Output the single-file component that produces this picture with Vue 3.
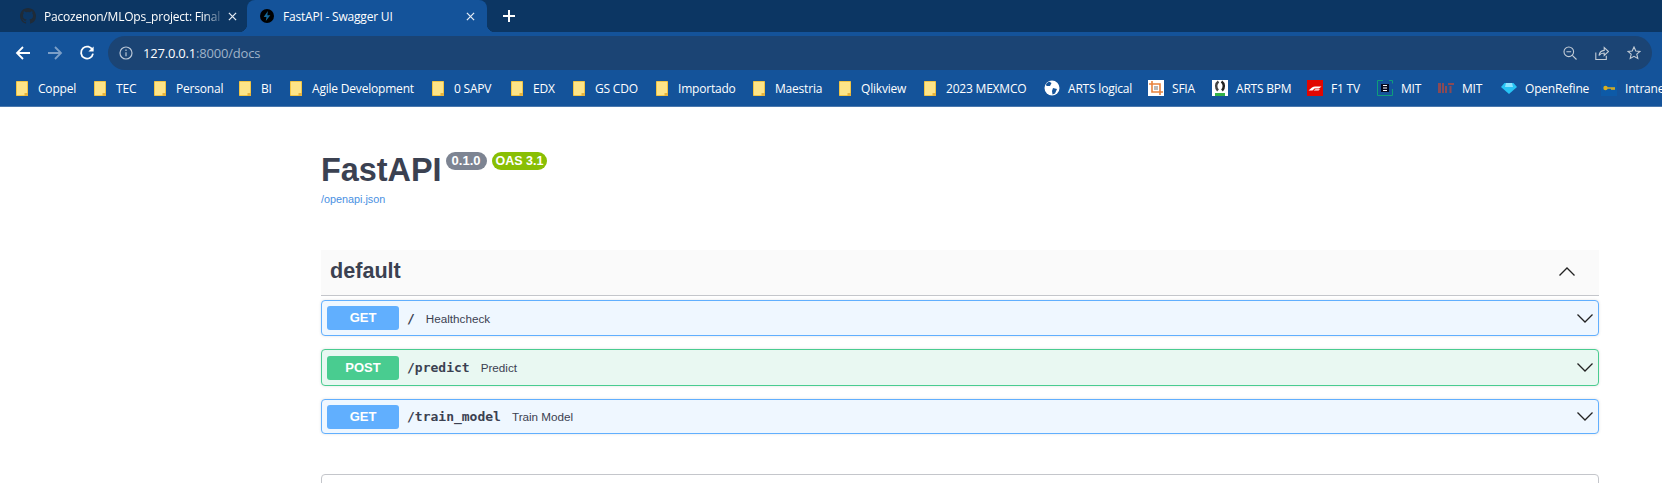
<template>
  <div class="browser">
    <div class="tabstrip">
      <div class="tab inactive">
        <svg class="favicon" viewBox="0 0 16 16"><path fill="#1f2b38" d="M8 0C3.58 0 0 3.58 0 8c0 3.54 2.29 6.53 5.47 7.59.4.07.55-.17.55-.38v-1.34c-2.23.48-2.69-1.07-2.69-1.07-.36-.92-.89-1.17-.89-1.17-.73-.5.05-.49.05-.49.8.06 1.23.82 1.23.82.71 1.23 1.87.87 2.33.66.07-.52.28-.87.5-1.07-1.78-.2-3.64-.89-3.64-3.95 0-.87.31-1.59.82-2.15-.08-.2-.36-1.02.08-2.12 0 0 .67-.21 2.2.82a7.6 7.6 0 0 1 4 0c1.53-1.03 2.2-.82 2.2-.82.44 1.1.16 1.92.08 2.12.51.56.82 1.27.82 2.15 0 3.07-1.87 3.75-3.65 3.95.29.25.54.73.54 1.48v2.2c0 .21.15.46.55.38A8 8 0 0 0 16 8c0-4.42-3.58-8-8-8z"/></svg>
        <span class="tab_title fade">Pacozenon/MLOps_project: Final</span>
        <svg class="close" viewBox="0 0 10 10"><path d="M1 1l8 8M9 1l-8 8"/></svg>
      </div>
      <div class="tab active">
        <svg class="favicon small" viewBox="0 0 16 16"><circle cx="8" cy="8" r="8" fill="#000"/><path fill="#14699a" d="M9 2.400 4.200 9h3.200l-.8 4.600L11.800 7H8.400z"/></svg>
        <span class="tab_title">FastAPI - Swagger UI</span>
        <svg class="close" viewBox="0 0 10 10"><path d="M1 1l8 8M9 1l-8 8"/></svg>
      </div>
      <svg class="newtab" viewBox="0 0 12 12"><path d="M6 0v12M0 6h12"/></svg>
    </div>

    <div class="toolbar">
      <svg class="nav" viewBox="0 0 16 16"><path d="M15 8H2M8 2 2 8l6 6"/></svg>
      <svg class="nav dim" viewBox="0 0 16 16"><path d="M1 8h13M8 2l6 6-6 6"/></svg>
      <svg class="nav" viewBox="0 0 16 16"><path d="M13.600 5.200A6 6 0 1 0 14 8.600"/><path class="solid" d="M14.600 1.400v5.200H9.400z"/></svg>
      <div class="omnibox">
        <svg class="info" viewBox="0 0 14 14"><circle cx="7" cy="7" r="6"/><path d="M7 6.200v4M7 3.600v1.400"/></svg>
        <span class="url"><b>127.0.0.1</b>:8000/docs</span>
        <div class="omni_icons">
          <svg viewBox="0 0 14 14"><circle cx="5.800" cy="5.800" r="4.800"/><path d="M9.300 9.300 13.500 13.500M3.400 5.800h4.800"/></svg>
          <svg viewBox="0 0 14 14"><path d="M.8 6.500v7h10.500V9.800M4 9.500C4.500 6.500 6.500 4.600 9.200 4.400V1.500l4.300 4-4.300 4V7C7 7 5.200 7.800 4 9.500z"/></svg>
          <svg viewBox="0 0 14 14"><path d="M7 1l1.800 4 4.200.4-3.200 2.800 1 4.300L7 10.300l-3.800 2.200 1-4.300L1 5.400 5.200 5z"/></svg>
        </div>
      </div>
    </div>

    <div class="bookmarks">
      <div v-for="(b, i) in bookmarks" :key="i" class="bookmark" :class="{ is_folder: b.icon === 'folder' }" :style="{ width: b.w + 'px' }">
        <span class="bm_icon">
          <svg v-if="b.icon === 'folder'" viewBox="0 0 12 15" class="folder">
            <path fill="#fde488" stroke="#f2c544" d="M.5.500h11v14H.5z"/><path fill="#e8b33c" d="M8.500 15v-3H12v3z"/>
          </svg>
          <svg v-else-if="b.icon === 'globe'" viewBox="0 0 16 16"><circle cx="8" cy="8" r="7.500" fill="#fff"/><path fill="#14539a" d="M5 1.500 7.500 3 6 6 2.500 6 2 4zM9 8l4 1-2 4.500-2.500 1L8 11z"/></svg>
          <svg v-else-if="b.icon === 'sfia'" viewBox="0 0 16 16"><rect width="16" height="16" fill="#fff"/><path fill="none" stroke="#e8823c" stroke-width="1.600" d="M1 4h11v11M4 1v11h11"/><rect x="6" y="6" width="4" height="4" fill="#b9b9b9"/></svg>
          <svg v-else-if="b.icon === 'bpm'" viewBox="0 0 16 16"><rect width="16" height="16" fill="#fff"/><path fill="none" stroke="#444" stroke-width="2.500" d="M6.500 1.500C3.500 3.500 3.500 8 6 10.500"/><path fill="none" stroke="#222" stroke-width="2.500" d="M9.500 1.500c3 2 3 6.500.5 9"/><rect x="3" y="13" width="10" height="3" fill="#34b34a"/></svg>
          <svg v-else-if="b.icon === 'f1'" viewBox="0 0 16 16"><rect width="16" height="16" fill="#e10600"/><path fill="#fff" d="M1.500 10.500 5 7.500c1-.8 2-1 3-1h6.500L12 8.500H7.500l-2 2zM6.500 10.500l2-1.200h4.500l-1.500 1.200z"/></svg>
          <svg v-else-if="b.icon === 'mit_e'" viewBox="0 0 16 16"><path fill="none" stroke="#0f9d7a" d="M15.500 3.500V.5H12M6 .5H.5v15h15V9"/><rect x="4" y="4" width="8" height="8" fill="#050a20"/><path stroke="#fff" d="M6 5.500h4M6 8h4M6 10.500h4"/></svg>
          <svg v-else-if="b.icon === 'mit_p'" viewBox="0 0 16 16"><path fill="#8a4a55" d="M0 3h3v10H0zM4 3h2v10H4zM7 6h2v7H7zM10 3h6v2h-6zM11.500 6h2v7h-2z"/></svg>
          <svg v-else-if="b.icon === 'gem'" viewBox="0 0 16 16"><path fill="#27c4f5" d="M3.500 3h9L16 7l-8 7-8-7z"/><path fill="#8be4ff" d="M5 3h6l1 4H4z"/></svg>
          <svg v-else viewBox="0 0 16 16"><rect width="16" height="16" fill="#0d5aa7"/><circle cx="4.500" cy="8" r="2.200" fill="#d8b020"/><path stroke="#d8b020" stroke-width="1.500" d="M6 8h8M11 8v2M13 8v2"/></svg>
        </span>
        <span class="bm_text">{{ b.label }}</span>
      </div>
    </div>

    <div class="swagger">
      <div class="info_block">
        <div class="title_row">
          <h2>FastAPI</h2>
          <span class="badge version">0.1.0</span>
          <span class="badge oas">OAS 3.1</span>
        </div>
        <a class="spec_link">/openapi.json</a>
      </div>

      <div class="tag_head">
        <span>default</span>
        <svg class="chevron" viewBox="0 0 16 9"><path d="M.5 8.500 8 1l7.500 7.500"/></svg>
      </div>

      <div class="op_list">
        <div v-for="op in operations" :key="op.path" class="op" :class="op.method.toLowerCase()">
          <span class="method">{{ op.method }}</span>
          <span class="path">{{ op.path }}</span>
          <span class="desc">{{ op.desc }}</span>
          <svg class="chevron" viewBox="0 0 16 9"><path d="M.5.5 8 8 15.500.5"/></svg>
        </div>
      </div>

      <div class="schemas"></div>
    </div>
  </div>
</template>

<script setup>
const bookmarks = [
  { label: 'Coppel', icon: 'folder', w: 78 },
  { label: 'TEC', icon: 'folder', w: 60 },
  { label: 'Personal', icon: 'folder', w: 85 },
  { label: 'BI', icon: 'folder', w: 51 },
  { label: 'Agile Development', icon: 'folder', w: 142 },
  { label: '0 SAPV', icon: 'folder', w: 79 },
  { label: 'EDX', icon: 'folder', w: 62 },
  { label: 'GS CDO', icon: 'folder', w: 83 },
  { label: 'Importado', icon: 'folder', w: 97 },
  { label: 'Maestria', icon: 'folder', w: 86 },
  { label: 'Qlikview', icon: 'folder', w: 85 },
  { label: '2023 MEXMCO', icon: 'folder', w: 120 },
  { label: 'ARTS logical', icon: 'globe', w: 104 },
  { label: 'SFIA', icon: 'sfia', w: 64 },
  { label: 'ARTS BPM', icon: 'bpm', w: 95 },
  { label: 'F1 TV', icon: 'f1', w: 70 },
  { label: 'MIT', icon: 'mit_e', w: 61 },
  { label: 'MIT', icon: 'mit_p', w: 63 },
  { label: 'OpenRefine', icon: 'gem', w: 100 },
  { label: 'Intranet', icon: 'key', w: 100 },
]

const operations = [
  { method: 'GET', path: '/', desc: 'Healthcheck' },
  { method: 'POST', path: '/predict', desc: 'Predict' },
  { method: 'GET', path: '/train_model', desc: 'Train Model' },
]
</script>

<style>
html,
body {
  margin: 0;
  background: #fff;
  overflow: hidden;
}
</style>

<style scoped>
.browser {
  width: 1662px;
  height: 483px;
  overflow: hidden;
  font-family: 'Open Sans', 'Liberation Sans', sans-serif;
}

/* chrome */
.tabstrip {
  height: 32px;
  background: #0c3663;
  display: flex;
  align-items: stretch;
}
.tab {
  position: relative;
  flex: none;
  display: flex;
  align-items: center;
  color: #fff;
  font-size: 12px;
  letter-spacing: -0.2px;
  box-sizing: border-box;
}
.tab.inactive {
  width: 247px;
  padding: 0 10px 0 20px;
}
.tab.active {
  width: 240px;
  background: #14539a;
  border-radius: 8px 8px 0 0;
  padding: 0 12px 0 13px;
}
.tab.active::before,
.tab.active::after {
  content: '';
  position: absolute;
  bottom: 0;
  width: 8px;
  height: 8px;
}
.tab.active::before {
  left: -8px;
  background: radial-gradient(circle at 0 0, transparent 8px, #14539a 8.5px);
}
.tab.active::after {
  right: -8px;
  background: radial-gradient(circle at 100% 0, transparent 8px, #14539a 8.5px);
}
.favicon {
  width: 16px;
  height: 16px;
  flex: none;
}
.favicon.small {
  width: 14px;
  height: 14px;
}
.tab_title {
  flex: 1;
  margin-left: 8px;
  white-space: nowrap;
  overflow: hidden;
}
.tab.active .tab_title {
  margin-left: 9px;
}
.tab_title.fade {
  -webkit-mask-image: linear-gradient(to right, #000 88%, transparent);
  mask-image: linear-gradient(to right, #000 88%, transparent);
}
.close {
  width: 9px;
  height: 9px;
  flex: none;
  margin-left: 3px;
  stroke: #e6edf5;
  stroke-width: 1.400;
  fill: none;
}
.newtab {
  width: 12px;
  height: 12px;
  margin: 10px 0 0 16px;
  stroke: #fff;
  stroke-width: 2;
  fill: none;
}
.toolbar {
  height: 38px;
  background: #14539a;
  display: flex;
  align-items: center;
  padding: 4px 10px 0 15px;
  box-sizing: border-box;
  gap: 16px;
}
.nav {
  width: 16px;
  height: 16px;
  flex: none;
  fill: none;
  stroke: #fff;
  stroke-width: 1.800;
}
.nav.dim {
  stroke: #7c9fc8;
}
.nav .solid {
  fill: #fff;
  stroke: none;
}
.omnibox {
  flex: 1;
  height: 34px;
  margin-left: -3px;
  background: #1b4474;
  border-radius: 17px;
  display: flex;
  align-items: center;
  padding: 0 11px;
}
.info {
  width: 14px;
  height: 14px;
  fill: none;
  stroke: #b9c6d6;
  stroke-width: 1.200;
}
.url {
  margin-left: 10px;
  font-size: 13px;
  letter-spacing: -0.2px;
  color: #9fb3c9;
}
.url b {
  font-weight: 400;
  color: #fff;
}
.omni_icons {
  margin-left: auto;
  display: flex;
  gap: 18px;
}
.omni_icons svg {
  width: 14px;
  height: 14px;
  fill: none;
  stroke: #c3ccd6;
  stroke-width: 1.100;
}
.bookmarks {
  height: 37px;
  background: #14539a;
  border-bottom: 1px solid #4a78ad;
  box-sizing: border-box;
  display: flex;
  align-items: center;
  padding: 0 0 0 16px;
}
.bookmark {
  flex: none;
  display: flex;
  align-items: center;
  color: #fff;
  font-size: 12px;
  letter-spacing: -0.2px;
  white-space: nowrap;
}
.bm_icon {
  width: 16px;
  height: 16px;
  flex: none;
  display: flex;
  align-items: center;
}
.bm_icon svg {
  width: 16px;
  height: 16px;
}
.bm_icon svg.folder {
  width: 12px;
  height: 15px;
}
.bm_text {
  margin-left: 8px;
}
.is_folder .bm_text {
  margin-left: 6px;
}

/* swagger */
.swagger {
  width: 1278px;
  margin-left: 321px;
  font-family: 'Liberation Sans', Arial, sans-serif;
  color: #3b4151;
}
.info_block {
  padding-top: 44px;
}
.title_row {
  display: flex;
  align-items: flex-start;
  height: 41px;
}
.title_row h2 {
  margin: 0;
  font-size: 32.400px;
  line-height: 38px;
  font-weight: 700;
}
.badge {
  margin-top: 1px;
  height: 18px;
  line-height: 18px;
  border-radius: 9px;
  color: #fff;
  font-weight: 700;
}
.version {
  margin-left: 4px;
  padding: 0 6px;
  font-size: 13px;
  background: #7d8492;
}
.oas {
  margin-left: 5px;
  padding: 0 4px;
  font-size: 12.500px;
  background: #89bf04;
}
.spec_link {
  display: block;
  font-size: 10.800px;
  line-height: 14px;
  color: #4990e2;
}
.tag_head {
  margin-top: 44px;
  height: 46px;
  box-sizing: border-box;
  background: #fafafa;
  border-bottom: 1px solid #c4c6cb;
  display: flex;
  align-items: center;
  justify-content: space-between;
  padding: 0 24px 3px 9px;
  font-size: 21.600px;
  font-weight: 700;
}
.chevron {
  width: 16px;
  height: 9px;
  flex: none;
  fill: none;
  stroke: #222;
  stroke-width: 1.300;
}
.op_list {
  padding-top: 4px;
  display: grid;
  grid-template-rows: 36px 36px 35px;
  row-gap: 13px;
}
.op {
  box-sizing: border-box;
  border: 1px solid;
  border-radius: 4px;
  display: flex;
  align-items: center;
  padding: 0 5px;
  box-shadow: 0 0 3px rgba(0, 0, 0, 0.12);
}
.op.post {
  margin-bottom: -1px;
}
.op.post + .op {
  margin-top: 1px;
  margin-bottom: -1px;
}
.op.get {
  background: #eff7ff;
  border-color: #61affe;
}
.op.post {
  background: #e9f8f2;
  border-color: #49cc90;
}
.method {
  width: 72px;
  height: 24px;
  border-radius: 3px;
  color: #fff;
  font-size: 13px;
  font-weight: 700;
  line-height: 24px;
  text-align: center;
  flex: none;
}
.op.get .method {
  background: #61affe;
}
.op.post .method {
  background: #49cc90;
}
.path {
  margin-left: 8px;
  font-family: 'DejaVu Sans Mono', 'Liberation Mono', monospace;
  font-size: 13px;
  font-weight: 600;
}
.desc {
  margin-left: 11px;
  font-size: 11.700px;
  flex: 1;
}
.schemas {
  margin-top: 41px;
  height: 60px;
  border: 1px solid #c4c6cb;
  border-radius: 4px;
}
</style>
